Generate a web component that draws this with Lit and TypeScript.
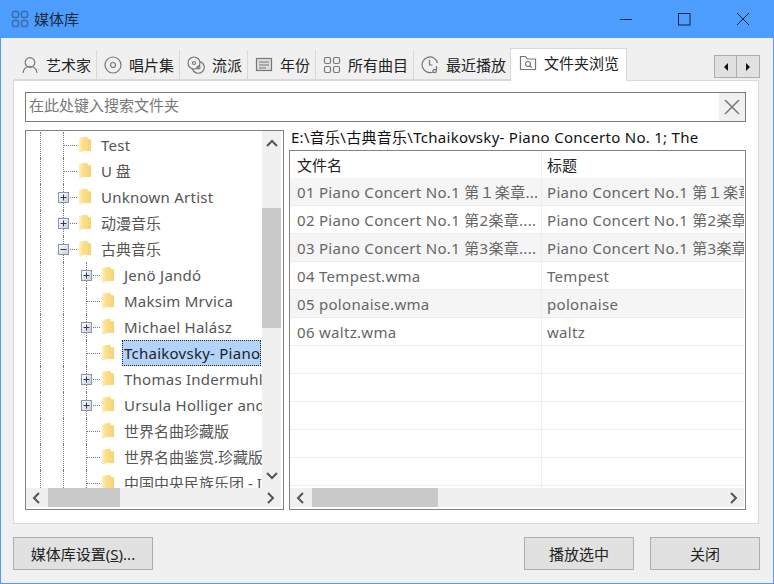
import { LitElement, html, css, svg } from 'lit';
import { customElement } from 'lit/decorators.js';

interface TreeRow {
  text: string;
  level: number;
  toggle?: '+' | '-';
  selected?: boolean;
}

const TREE: TreeRow[] = [
  { text: 'Test', level: 1 },
  { text: 'U 盘', level: 1 },
  { text: 'Unknown Artist', level: 1, toggle: '+' },
  { text: '动漫音乐', level: 1, toggle: '+' },
  { text: '古典音乐', level: 1, toggle: '-' },
  { text: 'Jenö Jandó', level: 2, toggle: '+' },
  { text: 'Maksim Mrvica', level: 2 },
  { text: 'Michael Halász', level: 2, toggle: '+' },
  { text: 'Tchaikovsky- Piano Concerto', level: 2, selected: true },
  { text: 'Thomas Indermuhle', level: 2, toggle: '+' },
  { text: 'Ursula Holliger and', level: 2, toggle: '+' },
  { text: '世界名曲珍藏版', level: 2 },
  { text: '世界名曲鉴赏.珍藏版', level: 2 },
  { text: '中国中央民族乐团 - I', level: 2 },
];

const TRACKS = [
  ['01 Piano Concert No.1 第１楽章...', 'Piano Concert No.1 第１楽章'],
  ['02 Piano Concert No.1 第2楽章....', 'Piano Concert No.1 第2楽章'],
  ['03 Piano Concert No.1 第3楽章....', 'Piano Concert No.1 第3楽章'],
  ['04 Tempest.wma', 'Tempest'],
  ['05 polonaise.wma', 'polonaise'],
  ['06 waltz.wma', 'waltz'],
  ['', ''], ['', ''], ['', ''], ['', ''], ['', ''], ['', ''],
];

const gridIcon = svg`
  <rect x="1.500" y="1.500" width="6" height="6" rx="1.500"/><rect x="10.500" y="1.500" width="6" height="6" rx="1.500"/>
  <rect x="1.500" y="10.500" width="6" height="6" rx="1.500"/><rect x="10.500" y="10.500" width="6" height="6" rx="1.500"/>`;

const TAB_ICONS = {
  artist: svg`<circle cx="9" cy="6.500" r="4.800"/><path d="M2 17c.5-4 3-6.500 7-6.500s6.500 2.500 7 6.500"/>`,
  album: svg`<circle cx="9" cy="9" r="8"/><circle cx="9" cy="9" r="2.500"/>`,
  genre: svg`<circle cx="7" cy="7" r="6"/><circle cx="7" cy="7" r="1.500"/><path d="M13 5.500a6 6 0 1 1-7.500 7.500"/><circle cx="11.500" cy="11.500" r="1.500"/>`,
  year: svg`<rect x="1.500" y="2.500" width="15" height="12" fill="#ddd"/><path d="M4 6h10M4 9h10M4 12h7"/>`,
  all: gridIcon,
  recent: svg`<path d="M12.500 15.700A7.800 7.800 0 1 1 16.500 7"/><path d="M8.500 4v5h3"/><path d="M15.500 10v5"/><circle cx="13.700" cy="15" r="1.700"/>`,
  folder: svg`<path d="M1.500 15.500V2.500h5l2 2.500h8v10.500z"/><circle cx="9" cy="10" r="2.500"/><path d="M11 12l2 1.500"/>`,
};

const TABS: { icon: keyof typeof TAB_ICONS; label: string; active?: boolean }[] = [
  { icon: 'artist', label: '艺术家' },
  { icon: 'album', label: '唱片集' },
  { icon: 'genre', label: '流派' },
  { icon: 'year', label: '年份' },
  { icon: 'all', label: '所有曲目' },
  { icon: 'recent', label: '最近播放' },
  { icon: 'folder', label: '文件夹浏览', active: true },
];

const folderIcon = html`<svg class="folder" width="12" height="17" viewBox="0 0 12 17">
  <defs><linearGradient id="fg" x1="0" x2="1" y1="0" y2="0">
    <stop offset="0" stop-color="#fff2c0"/><stop offset="0.3" stop-color="#fce08f"/><stop offset="1" stop-color="#f7d274"/>
  </linearGradient></defs>
  <path d="M0 2L8 0.500L9 3L12 3.500V15H4L0 17Z" fill="url(#fg)"/>
</svg>`;

@customElement('app-root')
export class AppRoot extends LitElement {
  static styles = css`
    :host {
      display: block;
      width: 774px;
      height: 584px;
      font: 15px/20px "Noto Sans", "Noto Sans CJK SC", sans-serif;
      color: #333;
    }
    * { box-sizing: border-box; }
    .window {
      height: 584px;
      display: flex;
      flex-direction: column;
      background: #f0f0f0;
      border: 1px solid #4d9dff;
      border-top: none;
    }
    .titlebar {
      height: 38px;
      flex: none;
      margin: 0 -1px;
      padding-left: 11px;
      display: flex;
      align-items: center;
      background: #4d9dff;
      color: #1a2a3c;
    }
    .titlebar .app-icon { fill: none; stroke: #3b6ea8; stroke-width: 1.500; margin-right: 5px; }
    .winbtns { margin-left: auto; display: flex; }
    .winbtns svg { display: block; width: 59px; height: 38px; fill: none; stroke: #10243c; stroke-width: 1; }
    .body { flex: 1; padding: 10px 12px 0; display: flex; flex-direction: column; }
    .tabbar { height: 32px; flex: none; display: flex; align-items: flex-end; padding-left: 1px; position: relative; z-index: 1; }
    .tab {
      height: 30px;
      padding: 1px 5px 0 7px;
      display: flex;
      align-items: center;
      gap: 7px;
      border-right: 1px solid #d9d9d9;
      border-bottom: 1px solid #d9d9d9;
      color: #222;
    }
    .tab svg { flex: none; fill: none; stroke: #777; stroke-width: 1.200; }
    .tab.active {
      height: 33px;
      margin: 0 0 -1px -2px;
      padding: 0 7px 4px 8px;
      background: #fff;
      border: 1px solid #d9d9d9;
      border-bottom: none;
    }
    .scroller { margin: 7px 1px 0 auto; align-self: flex-start; display: flex; }
    .scroller span {
      width: 23px;
      height: 23px;
      display: flex;
      align-items: center;
      justify-content: center;
      background: #e1e1e1;
      border: 1px solid #adadad;
    }
    .scroller span + span { width: 24px; margin-left: -1px; }
    .scroller svg { fill: #111; }
    .panel {
      height: 444px;
      flex: none;
      margin-right: 2px;
      padding: 11px 12px 13px 11px;
      background: #fff;
      border: 1px solid #d9d9d9;
      display: flex;
      flex-direction: column;
      gap: 8px;
    }
    .search {
      height: 30px;
      flex: none;
      display: flex;
      align-items: stretch;
      border: 1px solid #7a7a7a;
      padding-left: 3px;
      color: #777;
      line-height: 24px;
    }
    .search .hint { flex: 1; }
    .search .clear { width: 26px; background: #f0f0f0; display: flex; align-items: center; justify-content: center; }
    .search .clear svg { stroke: #777; stroke-width: 1.500; fill: none; }
    .split { height: 380px; display: flex; gap: 5px; }
    .listbox {
      border: 1px solid #828282;
      background: #fff;
      display: grid;
      overflow: hidden;
    }
    .tree {
      width: 259px;
      flex: none;
      grid-template-columns: 236px 19px;
      grid-template-rows: 357px 19px;
    }
    .viewport { overflow: hidden; padding-top: 1px; }
    .treerow { height: 26px; display: flex; padding-left: 14px; color: #555; white-space: nowrap; }
    .cell { width: 23px; height: 26px; flex: none; position: relative; }
    .cell::before {
      content: '';
      position: absolute;
      left: 0;
      top: 0;
      bottom: 0;
      border-left: 1px dotted #777;
    }
    .stub { width: 16px; }
    .stub::after {
      content: '';
      position: absolute;
      left: 1px;
      top: 13px;
      width: 13px;
      border-top: 1px dotted #777;
    }
    .toggle {
      position: absolute;
      left: -5px;
      top: 8px;
      width: 11px;
      height: 11px;
      z-index: 1;
      display: block;
    }
    .folder { flex: none; margin-top: 4px; }
    .label { margin-left: 10px; line-height: 26px; }
    .label.latin { letter-spacing: 0.25px; }
    .label.selected {
      margin: 0 1px 0 8px;
      flex: 1;
      min-width: 0;
      height: 26px;
      padding-left: 1px;
      line-height: 24px;
      background: #b3d3fb;
      border: 1px dotted #222;
      color: #222;
      overflow: hidden;
    }
    .vbar {
      background: #f0f0f0;
      display: flex;
      flex-direction: column;
      align-items: center;
      justify-content: space-between;
      position: relative;
      padding: 8px 0;
    }
    .vbar .thumb { position: absolute; left: 0; right: 0; top: 77px; height: 120px; background: #c9c9c9; }
    .hbar {
      background: #f0f0f0;
      display: flex;
      align-items: center;
      justify-content: space-between;
      position: relative;
      padding: 0 6px;
    }
    .hbar .thumb { position: absolute; top: 0; bottom: 0; background: #c9c9c9; }
    .tree .hbar { grid-column: 1 / 3; }
    .tree .hbar .thumb { left: 22px; width: 72px; }
    .bar-arrow { fill: none; stroke: #555; stroke-width: 2; display: block; }
    .right { flex: 1; min-width: 0; display: flex; flex-direction: column; }
    .path { height: 20px; padding: 0 0 5px 2px; line-height: 15px; color: #111; white-space: nowrap; overflow: hidden; letter-spacing: 0.28px; }
    .table {
      flex: 1;
      grid-template-columns: 1fr;
      grid-template-rows: 337px 19px;
      padding: 0 1px 2px 0;
    }
    .grid { overflow: hidden; }
    .thead, .trow { display: grid; grid-template-columns: 251px 1fr; white-space: nowrap; }
    .thead { height: 27px; line-height: 29px; color: #222; }
    .trow { height: 28px; line-height: 29px; color: #666; border-bottom: 1px solid #ededed; letter-spacing: 0.3px; }
    .trow.shade { background: #f5f5f5; }
    .thead div, .trow div { padding-left: 7px; overflow: hidden; }
    .thead div + div, .trow div + div { border-left: 1px solid #ededed; padding-left: 5px; }
    .table .hbar .thumb { left: 22px; width: 126px; }
    .footer { flex: 1; display: flex; gap: 16px; padding: 13px 1px 0 0; }
    .btn {
      width: 110px;
      height: 33px;
      display: flex;
      align-items: center;
      justify-content: center;
      background: #e1e1e1;
      border: 1px solid #adadad;
      color: #222;
    }
    .btn.wide { width: 140px; margin-right: auto; }
  `;

  private renderToggle(kind: '+' | '-') {
    return html`<svg class="toggle" viewBox="0 0 11 11">
      <defs><linearGradient id="tg" x1="0" x2="1" y1="0" y2="1">
        <stop offset="0" stop-color="#fff"/><stop offset="1" stop-color="#c8cdd8"/>
      </linearGradient></defs>
      <rect x=".5" y=".5" width="10" height="10" fill="url(#tg)" stroke="#8d95a6"/>
      <path d="M2.500 5.500h6${kind === '+' ? 'M5.500 2.500v6' : ''}" stroke="#2b3a63" fill="none"/>
    </svg>`;
  }

  private renderTreeRow(row: TreeRow) {
    const latin = /^[^\u4e00-\u9fff]+$/.test(row.text);
    return html`<div class="treerow">
      <div class="cell"></div>
      ${row.level === 2 ? html`<div class="cell"></div>` : ''}
      <div class="cell stub">${row.toggle ? this.renderToggle(row.toggle) : ''}</div>
      ${folderIcon}
      <div class="label ${row.selected ? 'selected' : ''} ${latin ? 'latin' : ''}">${row.text}</div>
    </div>`;
  }

  private arrow(dir: 'up' | 'down' | 'left' | 'right') {
    const d = { up: 'M1 7l5-5 5 5', down: 'M1 2l5 5 5-5', left: 'M7 1L2 6l5 5', right: 'M2 1l5 5-5 5' }[dir];
    const vertical = dir === 'up' || dir === 'down';
    return html`<svg class="bar-arrow" width=${vertical ? 12 : 9} height=${vertical ? 9 : 12}
      viewBox=${vertical ? '0 0 12 9' : '0 0 9 12'}><path d=${d}/></svg>`;
  }

  render() {
    return html`<div class="window">
      <div class="titlebar">
        <svg class="app-icon" width="18" height="18" viewBox="0 0 18 18">${gridIcon}</svg>
        <span>媒体库</span>
        <div class="winbtns">
          <svg viewBox="0 0 59 38"><path d="M23 19.500h12"/></svg>
          <svg viewBox="0 0 59 38"><rect x="22.500" y="13.500" width="11.500" height="11.500"/></svg>
          <svg viewBox="0 0 59 38"><path d="M22 13l12 12M34 13L22 25"/></svg>
        </div>
      </div>
      <div class="body">
        <div class="tabbar">
          ${TABS.map(t => html`<div class="tab ${t.active ? 'active' : ''}">
            <svg width="18" height="18" viewBox="0 0 18 18">${TAB_ICONS[t.icon]}</svg>
            <span>${t.label}</span>
          </div>`)}
          <div class="scroller">
            <span><svg width="6" height="8" viewBox="0 0 6 8"><path d="M5 0v8L1 4z"/></svg></span>
            <span><svg width="6" height="8" viewBox="0 0 6 8"><path d="M1 0v8l4-4z"/></svg></span>
          </div>
        </div>
        <div class="panel">
          <div class="search">
            <span class="hint">在此处键入搜索文件夹</span>
            <span class="clear"><svg width="16" height="16" viewBox="0 0 16 16"><path d="M1 1l14 14M15 1L1 15"/></svg></span>
          </div>
          <div class="split">
            <div class="listbox tree">
              <div class="viewport">${TREE.map(r => this.renderTreeRow(r))}</div>
              <div class="vbar"><div class="thumb"></div>${this.arrow('up')}${this.arrow('down')}</div>
              <div class="hbar"><div class="thumb"></div>${this.arrow('left')}${this.arrow('right')}</div>
            </div>
            <div class="right">
              <div class="path">E:\\音乐\\古典音乐\\Tchaikovsky- Piano Concerto No. 1; The</div>
              <div class="listbox table">
                <div class="grid">
                  <div class="thead"><div>文件名</div><div>标题</div></div>
                  ${TRACKS.map((t, i) => html`<div class="trow ${i % 2 === 0 && i < 6 ? 'shade' : ''}">
                    <div>${t[0]}</div><div>${t[1]}</div>
                  </div>`)}
                </div>
                <div class="hbar"><div class="thumb"></div>${this.arrow('left')}${this.arrow('right')}</div>
              </div>
            </div>
          </div>
        </div>
        <div class="footer">
          <div class="btn wide"><span>媒体库设置(<u>S</u>)...</span></div>
          <div class="btn">播放选中</div>
          <div class="btn">关闭</div>
        </div>
      </div>
    </div>`;
  }
}
